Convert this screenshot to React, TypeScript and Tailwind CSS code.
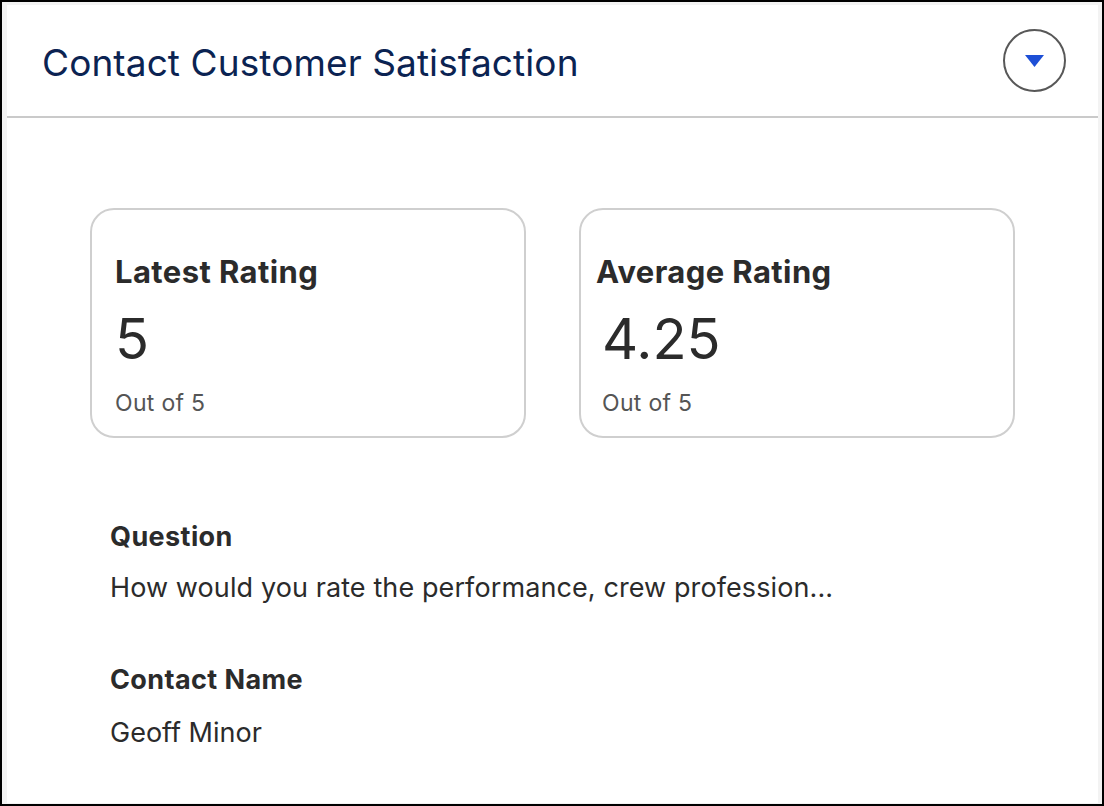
export default function App() {
  return (
    <div className="h-[806px] w-[1104px] border-2 border-black bg-[#f3f3f3] pt-[3px] pl-[5px] pr-[4px] pb-[1px] font-['Inter',sans-serif]">
      <div className="flex h-full flex-col bg-white">
        <header className="flex h-[113px] items-center justify-between border-b-2 border-[#cacaca] pl-[35px] pr-[32px]">
          <h1 className="pt-[3px] text-[37px] leading-none tracking-[0.1px] text-[#0b2352]">Contact Customer Satisfaction</h1>
          <button className="flex h-[63px] w-[63px] items-center justify-center rounded-full border-2 border-[#585858]">
            <svg width="19" height="12" viewBox="0 0 19 12">
              <path d="M0 0 L19 0 L9.5 12 Z" fill="#1d4fd6" />
            </svg>
          </button>
        </header>

        <div className="mt-[90px] flex gap-[53px] px-[83px]">
          <div className="h-[230px] w-[436px] rounded-[24px] border-2 border-[#cfcfcf] px-[23px] pt-[44px]">
            <h3 className="text-[31px] font-bold leading-[36px] tracking-[0.4px] text-[#2b2b2b]">Latest Rating</h3>
            <div className="mt-[20px] text-[56px] leading-[58px] text-[#2b2b2b]">5</div>
            <div className="mt-[22px] text-[23px] leading-[26px] tracking-[0.3px] text-[#555]">Out of 5</div>
          </div>
          <div className="h-[230px] w-[436px] rounded-[24px] border-2 border-[#cfcfcf] pl-[15px] pt-[44px]">
            <h3 className="text-[31px] font-bold leading-[36px] tracking-[0.4px] text-[#2b2b2b]">Average Rating</h3>
            <div className="mt-[20px] pl-[6px] text-[56px] leading-[58px] text-[#2b2b2b]">4.25</div>
            <div className="mt-[22px] pl-[6px] text-[23px] leading-[26px] tracking-[0.3px] text-[#555]">Out of 5</div>
          </div>
        </div>

        <div className="mt-[83px] pl-[103px] text-[#2b2b2b]">
          <div className="text-[27px] font-bold leading-[32px] tracking-[0.4px]">Question</div>
          <div className="mt-[19px] text-[27px] leading-[32px] tracking-[0.1px]">How would you rate the performance, crew profession...</div>
          <div className="mt-[60px] text-[27px] font-bold leading-[32px] tracking-[0.4px]">Contact Name</div>
          <div className="mt-[21px] text-[27px] leading-[32px]">Geoff Minor</div>
        </div>
      </div>
    </div>
  )
}
